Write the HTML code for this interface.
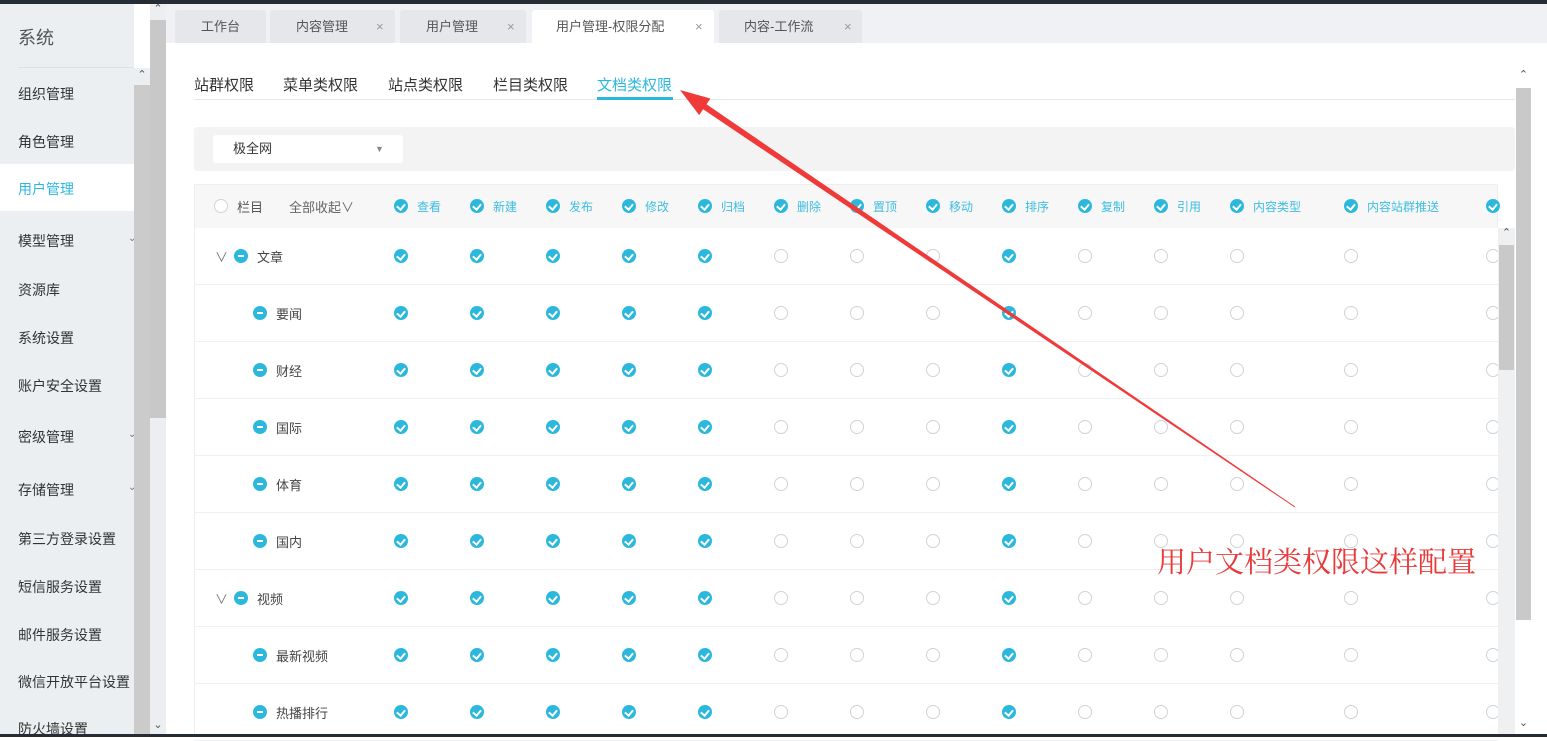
<!DOCTYPE html>
<html><head><meta charset="utf-8"><style>
*{margin:0;padding:0;box-sizing:border-box}
body{width:1547px;height:737px;overflow:hidden;position:relative;background:#fff;font-family:"Liberation Sans","Noto Sans CJK SC",sans-serif;color:#333}
.a{position:absolute}
#top{left:0;top:0;width:1547px;height:4px;background:#262c33}
#bot{left:0;top:734px;width:1547px;height:3px;background:#262c33}
#side{left:0;top:4px;width:134px;height:730px;background:#eceff2}
.si{position:absolute;left:18px;font-size:14px;color:#333}
.arr{position:absolute;left:128px;font-size:10px;color:#777}
#tabbar{left:166px;top:4px;width:1381px;height:39px;background:#eff1f4}
.tab{position:absolute;top:6px;height:33px;background:#e5e7ea;font-size:13px;color:#555;line-height:33px;border-radius:3px 3px 0 0}
.tab b{position:absolute;font-weight:normal}
.tab i{position:absolute;font-style:normal;color:#999;font-size:13px}
.st{position:absolute;top:74px;font-size:15px;color:#333}
.k,.u{position:absolute;width:14px;height:14px;border-radius:50%}
.k{background:#2cb8dc}
.k:after{content:"";position:absolute;left:4px;top:3px;width:4px;height:6px;border:solid #fff;border-width:0 2px 2px 0;transform:rotate(40deg)}
.u{border:1px solid #cfd3d6;background:#fff}
.m{position:absolute;width:14px;height:14px;border-radius:50%;background:#2cb8dc}
.m:after{content:"";position:absolute;left:4px;top:6px;width:6px;height:2px;background:#fff}
.row{position:absolute;left:194px;width:1304px;height:57px;border-bottom:1px solid #eef0f2;font-size:13px;color:#444}
.row span{position:absolute;top:21px}
.row span:nth-child(1){left:200px}.row span:nth-child(2){left:276px}.row span:nth-child(3){left:352px}.row span:nth-child(4){left:428px}.row span:nth-child(5){left:504px}.row span:nth-child(6){left:580px}.row span:nth-child(7){left:656px}.row span:nth-child(8){left:732px}.row span:nth-child(9){left:808px}.row span:nth-child(10){left:884px}.row span:nth-child(11){left:960px}.row span:nth-child(12){left:1036px}.row span:nth-child(13){left:1150px}.row span:nth-child(14){left:1292px}
.row em{position:absolute;font-style:normal;top:19px}
.hd{position:absolute;top:198px;font-size:12px;color:#3fbde0}
</style></head><body>
<div id="top" class="a"></div>
<div id="side" class="a">
<div class="si" style="top:20px;font-size:18px;color:#555">系统</div>
<div class="a" style="left:18px;top:63px;width:116px;height:1px;background:#dde1e5"></div>
<div class="si" style="top:80px">组织管理</div>
<div class="si" style="top:128px">角色管理</div>
<div class="a" style="left:0;top:160px;width:134px;height:47px;background:#fff"></div>
<div class="si" style="top:175px;color:#2cb8dc">用户管理</div>
<div class="si" style="top:227px">模型管理</div><div class="arr" style="top:229px">⌄</div>
<div class="si" style="top:276px">资源库</div>
<div class="si" style="top:324px">系统设置</div>
<div class="si" style="top:372px">账户安全设置</div>
<div class="si" style="top:423px">密级管理</div><div class="arr" style="top:425px">⌄</div>
<div class="si" style="top:476px">存储管理</div><div class="arr" style="top:478px">⌄</div>
<div class="si" style="top:525px">第三方登录设置</div>
<div class="si" style="top:573px">短信服务设置</div>
<div class="si" style="top:621px">邮件服务设置</div>
<div class="si" style="top:668px;white-space:nowrap;width:134px;overflow:hidden">微信开放平台设置</div>
<div class="si" style="top:715px">防火墙设置</div>
</div>
<div class="a" style="left:134px;top:85px;width:16px;height:649px;background:#cbcbcb"></div>
<div class="a" style="left:134px;top:68px;width:16px;height:17px;background:#eceff2;font-size:11px;color:#555;text-align:center">⌃</div>
<div class="a" style="left:150px;top:4px;width:16px;height:730px;background:#eceff2"></div>
<div class="a" style="left:150px;top:20px;width:16px;height:398px;background:#c8c8c8"></div>
<div class="a" style="left:150px;top:2px;width:16px;font-size:11px;color:#555;text-align:center">⌃</div>
<div class="a" style="left:150px;top:718px;width:16px;font-size:11px;color:#555;text-align:center">⌄</div>
<div id="tabbar" class="a">
<div class="tab" style="left:9px;width:91px"><b style="left:26px">工作台</b></div>
<div class="tab" style="left:104px;width:125px"><b style="left:26px">内容管理</b><i style="left:106px">×</i></div>
<div class="tab" style="left:234px;width:126px"><b style="left:26px">用户管理</b><i style="left:107px">×</i></div>
<div class="tab" style="left:366px;width:182px;background:#fff"><b style="left:24px">用户管理-权限分配</b><i style="left:163px">×</i></div>
<div class="tab" style="left:553px;width:143px"><b style="left:25px">内容-工作流</b><i style="left:125px">×</i></div>
</div>
<div class="st" style="left:194px">站群权限</div>
<div class="st" style="left:283px">菜单类权限</div>
<div class="st" style="left:388px">站点类权限</div>
<div class="st" style="left:493px">栏目类权限</div>
<div class="st" style="left:597px;color:#2cb8dc">文档类权限</div>
<div class="a" style="left:194px;top:99px;width:1321px;height:1px;background:#e4e6e8"></div>
<div class="a" style="left:597px;top:97px;width:76px;height:3px;background:#2cb8dc"></div>
<div class="a" style="left:194px;top:127px;width:1321px;height:44px;background:#f3f3f3;border-radius:3px"></div>
<div class="a" style="left:213px;top:135px;width:190px;height:28px;background:#fff;border-radius:3px;font-size:13px;line-height:28px;padding-left:20px">极全网<span style="position:absolute;left:162px;color:#888;font-size:9px">▼</span></div>
<div class="a" style="left:194px;top:184px;width:1304px;height:44px;background:#f7f7f7;border:1px solid #eee;border-bottom:none"></div>
<div class="a" style="left:194px;top:228px;width:1px;height:506px;background:#eee"></div>
<div class="u" style="left:214px;top:199px"></div>
<div class="hd" style="left:237px;color:#555;font-size:13px;top:197px">栏目</div>
<div class="hd" style="left:289px;color:#666;font-size:13px;top:197px">全部收起∨</div>
<div class="k" style="left:394px;top:199px"></div><div class="hd" style="left:417px">查看</div>
<div class="k" style="left:470px;top:199px"></div><div class="hd" style="left:493px">新建</div>
<div class="k" style="left:546px;top:199px"></div><div class="hd" style="left:569px">发布</div>
<div class="k" style="left:622px;top:199px"></div><div class="hd" style="left:645px">修改</div>
<div class="k" style="left:698px;top:199px"></div><div class="hd" style="left:721px">归档</div>
<div class="k" style="left:774px;top:199px"></div><div class="hd" style="left:797px">删除</div>
<div class="k" style="left:850px;top:199px"></div><div class="hd" style="left:873px">置顶</div>
<div class="k" style="left:926px;top:199px"></div><div class="hd" style="left:949px">移动</div>
<div class="k" style="left:1002px;top:199px"></div><div class="hd" style="left:1025px">排序</div>
<div class="k" style="left:1078px;top:199px"></div><div class="hd" style="left:1101px">复制</div>
<div class="k" style="left:1154px;top:199px"></div><div class="hd" style="left:1177px">引用</div>
<div class="k" style="left:1230px;top:199px"></div><div class="hd" style="left:1253px">内容类型</div>
<div class="k" style="left:1344px;top:199px"></div><div class="hd" style="left:1367px">内容站群推送</div>
<div class="k" style="left:1486px;top:199px"></div>

<div class="row" style="top:228px"><span class="k"></span><span class="k"></span><span class="k"></span><span class="k"></span><span class="k"></span><span class="u"></span><span class="u"></span><span class="u"></span><span class="k"></span><span class="u"></span><span class="u"></span><span class="u"></span><span class="u"></span><span class="u"></span><em style="left:21px;color:#777">∨</em><i class="m" style="left:40px;top:21px"></i><em style="left:63px">文章</em></div>
<div class="row" style="top:285px"><span class="k"></span><span class="k"></span><span class="k"></span><span class="k"></span><span class="k"></span><span class="u"></span><span class="u"></span><span class="u"></span><span class="k"></span><span class="u"></span><span class="u"></span><span class="u"></span><span class="u"></span><span class="u"></span><i class="m" style="left:59px;top:21px"></i><em style="left:82px">要闻</em></div>
<div class="row" style="top:342px"><span class="k"></span><span class="k"></span><span class="k"></span><span class="k"></span><span class="k"></span><span class="u"></span><span class="u"></span><span class="u"></span><span class="k"></span><span class="u"></span><span class="u"></span><span class="u"></span><span class="u"></span><span class="u"></span><i class="m" style="left:59px;top:21px"></i><em style="left:82px">财经</em></div>
<div class="row" style="top:399px"><span class="k"></span><span class="k"></span><span class="k"></span><span class="k"></span><span class="k"></span><span class="u"></span><span class="u"></span><span class="u"></span><span class="k"></span><span class="u"></span><span class="u"></span><span class="u"></span><span class="u"></span><span class="u"></span><i class="m" style="left:59px;top:21px"></i><em style="left:82px">国际</em></div>
<div class="row" style="top:456px"><span class="k"></span><span class="k"></span><span class="k"></span><span class="k"></span><span class="k"></span><span class="u"></span><span class="u"></span><span class="u"></span><span class="k"></span><span class="u"></span><span class="u"></span><span class="u"></span><span class="u"></span><span class="u"></span><i class="m" style="left:59px;top:21px"></i><em style="left:82px">体育</em></div>
<div class="row" style="top:513px"><span class="k"></span><span class="k"></span><span class="k"></span><span class="k"></span><span class="k"></span><span class="u"></span><span class="u"></span><span class="u"></span><span class="k"></span><span class="u"></span><span class="u"></span><span class="u"></span><span class="u"></span><span class="u"></span><i class="m" style="left:59px;top:21px"></i><em style="left:82px">国内</em></div>
<div class="row" style="top:570px"><span class="k"></span><span class="k"></span><span class="k"></span><span class="k"></span><span class="k"></span><span class="u"></span><span class="u"></span><span class="u"></span><span class="k"></span><span class="u"></span><span class="u"></span><span class="u"></span><span class="u"></span><span class="u"></span><em style="left:21px;color:#777">∨</em><i class="m" style="left:40px;top:21px"></i><em style="left:63px">视频</em></div>
<div class="row" style="top:627px"><span class="k"></span><span class="k"></span><span class="k"></span><span class="k"></span><span class="k"></span><span class="u"></span><span class="u"></span><span class="u"></span><span class="k"></span><span class="u"></span><span class="u"></span><span class="u"></span><span class="u"></span><span class="u"></span><i class="m" style="left:59px;top:21px"></i><em style="left:82px">最新视频</em></div>
<div class="row" style="top:684px"><span class="k"></span><span class="k"></span><span class="k"></span><span class="k"></span><span class="k"></span><span class="u"></span><span class="u"></span><span class="u"></span><span class="k"></span><span class="u"></span><span class="u"></span><span class="u"></span><span class="u"></span><span class="u"></span><i class="m" style="left:59px;top:21px"></i><em style="left:82px">热播排行</em></div>

<div class="a" style="left:1498px;top:228px;width:17px;height:506px;background:#eef0f2"></div>
<div class="a" style="left:1499px;top:245px;width:15px;height:125px;background:#c9c9c9"></div>
<div class="a" style="left:1498px;top:226px;width:17px;font-size:11px;color:#555;text-align:center">⌃</div>
<div class="a" style="left:1515px;top:68px;width:17px;height:666px;background:#fff"></div>
<div class="a" style="left:1516px;top:88px;width:15px;height:532px;background:#c9c9c9"></div>
<div class="a" style="left:1515px;top:68px;width:17px;font-size:11px;color:#555;text-align:center">⌃</div>
<div class="a" style="left:1515px;top:716px;width:17px;font-size:11px;color:#555;text-align:center">⌄</div>

<svg class="a" style="left:0;top:0" width="1547" height="737"><polygon points="680,90 710.4,98.5 706.5,104.3 1295.3,506.6 1294.7,507.4 703.1,109.3 699.2,115.1" fill="#f03a3a"/></svg>
<div class="a" style="left:1157px;top:540px;font-size:29px;color:#e83a3a;font-family:'Liberation Serif','Noto Serif CJK SC',serif;white-space:nowrap">用户文档类权限这样配置</div>
<div id="bot" class="a"></div>
</body></html>
